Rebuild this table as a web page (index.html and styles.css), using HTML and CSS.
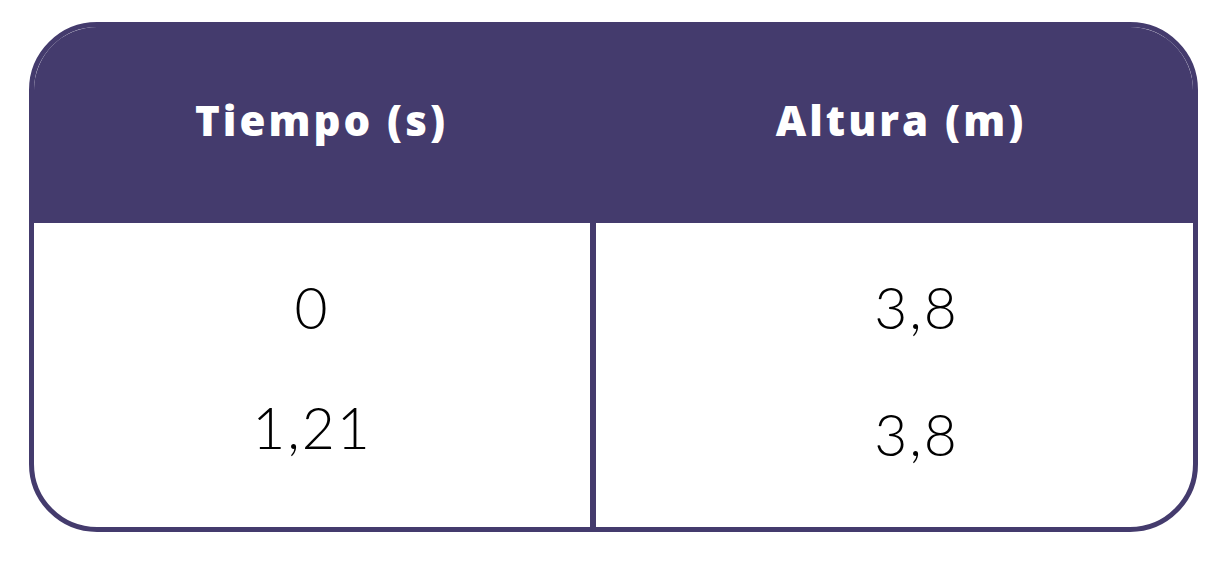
FILE: index.html
```html
<!DOCTYPE html>
<html lang="es">
<head>
<meta charset="utf-8">
<link rel="stylesheet" href="styles.css">
</head>
<body>
<div class="table">
  <div class="head">
    <div class="hcell hcell-left">Tiempo (s)</div>
    <div class="hcell hcell-right">Altura (m)</div>
  </div>
  <div class="body">
    <div class="col col-left">
      <div class="val">0</div>
      <div class="val">1,21</div>
    </div>
    <div class="col col-right">
      <div class="val">3,8</div>
      <div class="val val-low">3,8</div>
    </div>
  </div>
</div>
</body>
</html>
```
FILE: styles.css
```css
html, body {
  margin: 0;
  background: #ffffff;
}
body {
  padding: 22px 0 0 29px;
  font-family: "Lato", "Liberation Sans", sans-serif;
}
.table {
  width: 1169px;
  height: 510px;
  box-sizing: border-box;
  border: 5px solid #443b6d;
  border-radius: 68px;
  overflow: hidden;
  display: flex;
  flex-direction: column;
}
.head {
  height: 196px;
  background: #443b6d;
  display: grid;
  grid-template-columns: 556px 1fr;
  color: #ffffff;
  font-family: "Open Sans", "Liberation Sans", sans-serif;
  font-weight: 800;
  font-size: 42px;
  letter-spacing: 3px;
}
.hcell {
  padding-top: 68px;
  text-align: center;
  line-height: 50px;
}
.hcell-left { padding-left: 19px; }
.hcell-right { padding-left: 19px; }
.body {
  flex: 1;
  display: grid;
  grid-template-columns: 556px 1fr;
}
.col {
  padding-top: 55px;
  display: flex;
  flex-direction: column;
  gap: 62px;
  font-size: 57px;
  font-weight: 300;
  color: #000000;
  line-height: 58px;
  letter-spacing: 2px;
}
.col-right {
  border-left: 6px solid #443b6d;
  padding-left: 44px;
}
.val { text-align: center; }
.val-low { margin-top: 7px; }
```
